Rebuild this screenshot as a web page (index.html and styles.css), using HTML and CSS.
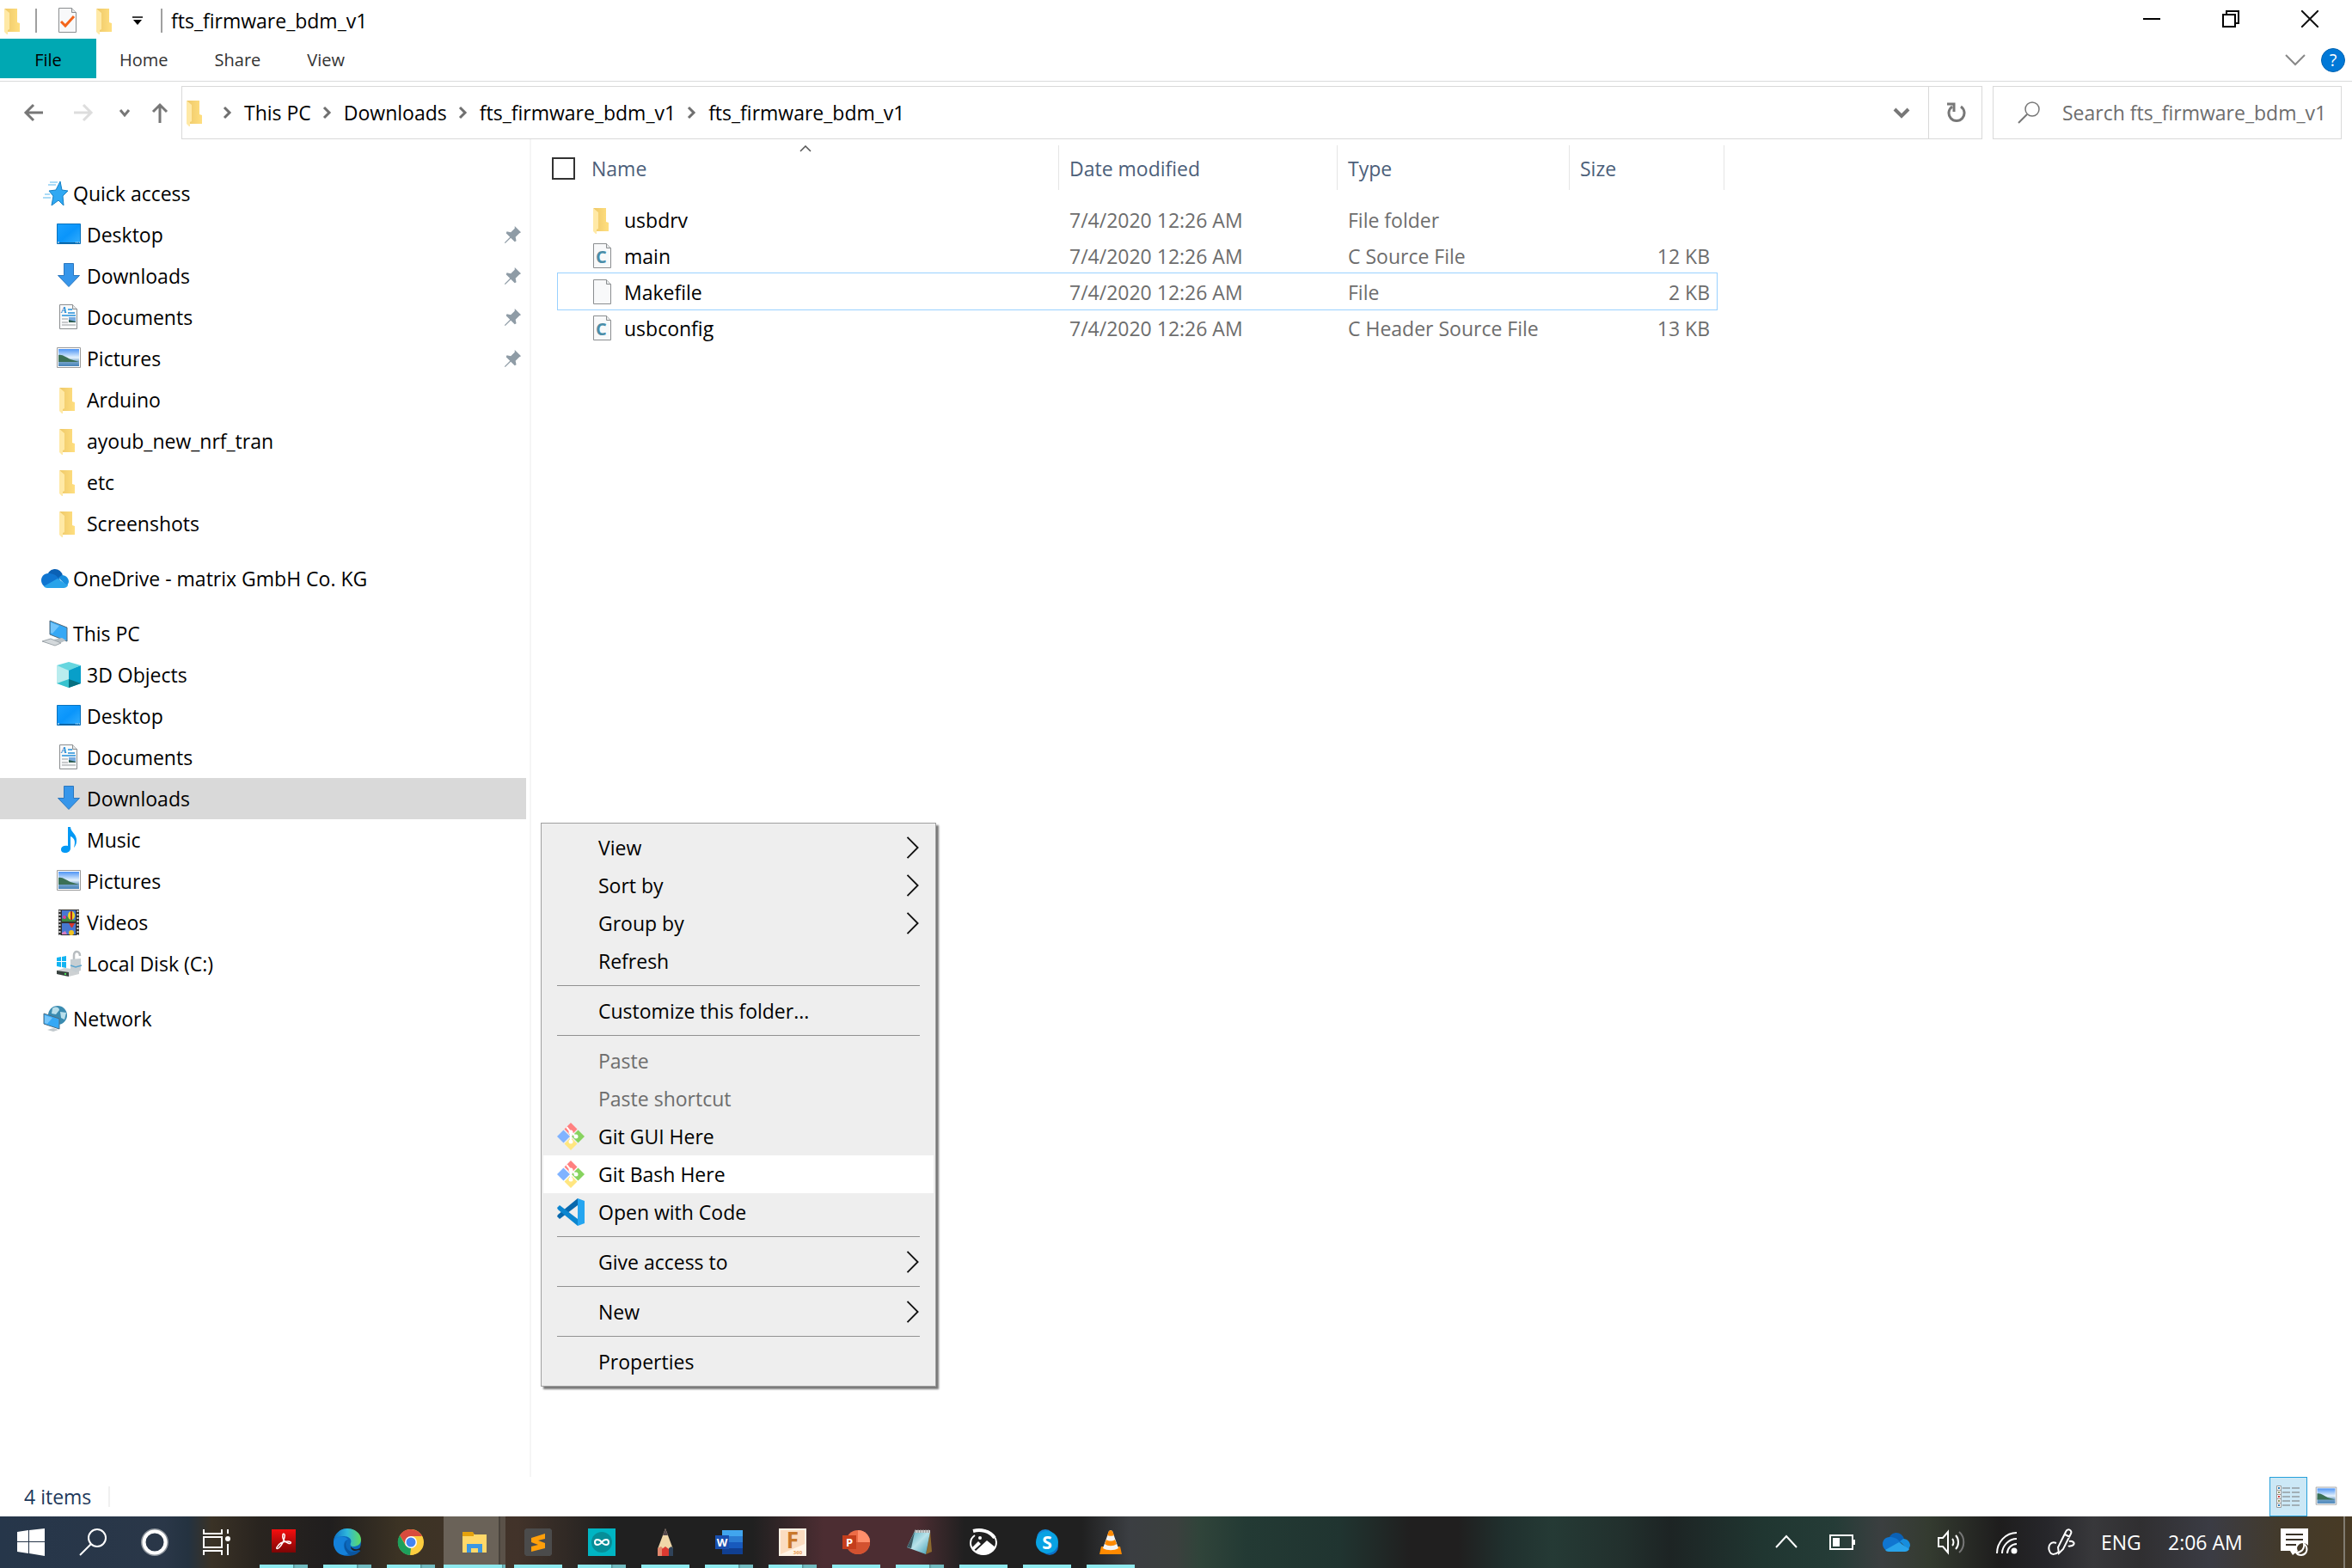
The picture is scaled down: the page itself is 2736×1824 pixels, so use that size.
FILE: index.html
```html
<!DOCTYPE html>
<html lang="en">
<head>
    <meta charset="UTF-8">
    <meta name="viewport" content="width=device-width, initial-scale=1.0">
    <title>fts_firmware_bdm_v1</title>
    <link rel="stylesheet" href="styles.css">
</head>
<body>
    <!-- shared icons -->
    <svg class="defs" width="0" height="0">
        <defs>
            <linearGradient id="gFolder"><stop offset="0" stop-color="#eec868"/><stop offset="1" stop-color="#ffdf80"/></linearGradient>
            <linearGradient id="gBlue" x2="1" y2="1"><stop offset="0" stop-color="#1ba1ff"/><stop offset=".5" stop-color="#0a95fb"/><stop offset="1" stop-color="#35aefc"/></linearGradient>
            <linearGradient id="gSky" x2="0" y2="1"><stop offset="0" stop-color="#4f95f5"/><stop offset=".5" stop-color="#e4f2fd"/><stop offset=".7" stop-color="#7fa9cf"/><stop offset="1" stop-color="#4783b8"/></linearGradient>
            <linearGradient id="gEdge" x2="1" y2="0"><stop offset="0" stop-color="#0c6fc7"/><stop offset=".5" stop-color="#2fb8dc"/><stop offset="1" stop-color="#5fdb60"/></linearGradient>
            <linearGradient id="gAdobe" x2="0" y2="1"><stop offset="0" stop-color="#f50f0f"/><stop offset="1" stop-color="#7d0505"/></linearGradient>
            <linearGradient id="gNote" x2="1" y2="1"><stop offset="0" stop-color="#4ba6b9"/><stop offset=".5" stop-color="#b9e3ea"/><stop offset="1" stop-color="#3f9cb3"/></linearGradient>
        </defs>
        <symbol id="folder" viewBox="0 0 32 32">
            <path d="M5 2h15v16l3 1v10H8V6z" fill="url(#gFolder)"/>
            <path d="M5 2l6 5v19l-2 1v6l-4-4z" fill="#ffe9a6"/>
        </symbol>
        <symbol id="star" viewBox="0 0 32 32">
            <path d="M22 2l2 10 7 1-6 6 1 11-6-6-8 6 2-11-5-6 8-1z" fill="#31a9f3" stroke="#1580c4"/>
            <path d="M10 3h9M8 6h9M4 17h6M2 21h9" stroke="#8fcff5" stroke-width="1.5"/>
        </symbol>
        <symbol id="desktop" viewBox="0 0 32 32">
            <path d="M2.500 3.500h27v23h-27z" fill="url(#gBlue)" stroke="#0a73be"/>
            <path d="M3 25.500h26" stroke="#0b5d98"/><path d="M3 25h2M24 25h1M26 25h1M28 25h1" stroke="#fff"/>
        </symbol>
        <symbol id="download" viewBox="0 0 32 32"><path d="M10.500 1.500h11v14h7L16 28.500 3.500 15.500h7z" fill="#3796ea" stroke="#2b77bf"/></symbol>
        <symbol id="page" viewBox="0 0 32 32">
            <path d="M5.500 1.500h15l5 5v23h-20z" fill="#f8f9fa" stroke="#8b8e90"/>
            <path d="M20.500 1.500v5h5" fill="#e7e9ea" stroke="#8b8e90"/>
        </symbol>
        <symbol id="document" viewBox="0 0 32 32">
            <use href="#page"/>
            <text x="7" y="11" font-family="Liberation Serif, serif" font-size="10" font-weight="bold" font-style="italic" fill="#1583cf">A</text>
            <path d="M15 7h5M15 11h8M8 14h16" stroke="#2590da" stroke-width="1.500"/>
            <path d="M8 18h7M8 22h7M8 25h16" stroke="#9a9da0" stroke-width="1.200"/>
            <path d="M16 16h8v6h-8z" fill="#78abe0"/><path d="M16 19l8 2v1h-8z" fill="#2f5d50"/>
        </symbol>
        <symbol id="picture" viewBox="0 0 32 32">
            <path d="M2.500 3.500h27v23h-27z" fill="#fff" stroke="#9b9b9b"/>
            <path d="M4 5h24v20H4z" fill="url(#gSky)"/>
            <path d="M4 12c5-1 9 3 14 5l10 3H4z" fill="#3b7056"/>
        </symbol>
        <symbol id="pin" viewBox="0 0 24 24">
            <path d="M15 1l8 8-2 1-5 5 1 5-2 1-5-5-7 7-1-1 7-7-5-5 1-2 5 1 5-5z" fill="#8f9ca6"/>
        </symbol>
        <symbol id="cloud" viewBox="0 0 32 32">
            <path d="M7 15a9 9 0 0 1 18-2l-8 6z" fill="#0b61b5"/>
            <path d="M8 10c-5 0-8 4-8 8s3 8 6 8l16-8c-4-6-8-8-14-8z" fill="#1075d0"/>
            <path d="M20 15l4-3c5 0 8 4 8 8l-2 5z" fill="#178ddd"/>
            <path d="M3 25l16-9 12 8c-1 2-3 3-5 3H7c-2 0-3-1-4-2z" fill="#29a3ea"/>
        </symbol>
        <symbol id="pc" viewBox="0 0 32 32">
            <path d="M10 1l20 8v16L10 17z" fill="#35a8f5" stroke="#52697a"/>
            <path d="M11 3l10 4-8 9-2-1z" fill="#74c5fa"/>
            <path d="M14 23l10-2 5 3-7 3z" fill="#b9c1c6"/><path d="M1 25l10-3 12 5-7 3z" fill="#d4d9dc" stroke="#9da5aa"/>
        </symbol>
        <symbol id="cube" viewBox="0 0 32 32">
            <path d="M2 5l14 5v21L2 26z" fill="#b9ecee"/><path d="M30 5l-14 5v21l14-5z" fill="#089fc9"/>
            <path d="M2 5l14-4 14 4-14 6z" fill="#66d6df"/><path d="M2 26l14-5v10z" fill="#38c3cf"/><path d="M30 26l-14-5v10z" fill="#066f80"/>
        </symbol>
        <symbol id="music" viewBox="0 0 32 32">
            <path d="M15 1h3c0 6 8 8 7 17 0 3-2 6-3 7 2-7 1-11-4-13v14c0 3-3 5-6 5s-5-1-5-4 3-5 8-4z" fill="#0499f5"/>
        </symbol>
        <symbol id="video" viewBox="0 0 32 32">
            <path d="M4 1h24v30H4z" fill="#333"/><path d="M8 2h16v13H8zM8 17h16v13H8z" fill="#4777d2"/>
            <path d="M5.500 2v29M26.500 2v29" stroke="#ddd" stroke-width="2" stroke-dasharray="2 2"/>
            <path d="M8 12l5-4 5 5h6v2H8z" fill="#3c8a42"/><circle cx="11" cy="10" r="2" fill="#d93fa0"/>
            <ellipse cx="19" cy="8" rx="4" ry="5" fill="#f1d120"/><path d="M19 3v10" stroke="#b1281d" stroke-width="2"/>
            <path d="M16 17h7l-3 5h-1z" fill="#d6352b"/><circle cx="19" cy="28" r="3" fill="#f1c320"/><path d="M8 28l4-2 2 4H8z" fill="#d57fc3"/>
        </symbol>
        <symbol id="disk" viewBox="0 0 32 32">
            <path d="M2 9l5-1v5H2zM8 8l5-1v6H8zM2 14h5v6l-5-1zM8 14h5v7l-5-1z" fill="#12b4f2"/>
            <path d="M2 24l9-3 17 2v5l-12 3-14-3z" fill="#cdd1d3"/><path d="M2 24l14 2v5L2 28z" fill="#37413e"/><path d="M11 28h2" stroke="#4ce05a" stroke-width="2"/>
            <path d="M22 12V6c0-6 7-5 7 1" fill="none" stroke="#b8bdc0" stroke-width="2.500"/><path d="M18 11l12-1v14l-6 2-6-3z" fill="#c7ced2"/><path d="M18 18l6 2 7-2" fill="none" stroke="#5ca5cf" stroke-width="1.500"/>
        </symbol>
        <symbol id="network" viewBox="0 0 32 32">
            <circle cx="19" cy="12" r="11" fill="#3a8bb0"/><path d="M13 4c4-3 8-1 8 2l-4 5-5-1zM22 8l7 1-2 8-4-2z" fill="#b9dfeb"/>
            <path d="M3 10l18 6v12L3 22z" fill="#35a8f5" stroke="#4d6d82"/><path d="M4 12l9 3-6 7-3-1z" fill="#74c5fa"/>
            <path d="M7 29l7-2 6 2-6 2z" fill="#c2c9cd"/>
        </symbol>
        <symbol id="cfile" viewBox="0 0 32 32">
            <use href="#page"/>
            <text x="8" y="24" font-family="Open Sans, sans-serif" font-size="20" font-weight="bold" fill="#4a8da8">C</text>
        </symbol>
        <symbol id="crumb" viewBox="0 0 12 16"><path d="M2 2l6 6-6 6" fill="none" stroke="#6f6f6f" stroke-width="3"/></symbol>
        <symbol id="sub" viewBox="0 0 16 28"><path d="M1 1l13 13L1 27" fill="none" stroke="#111" stroke-width="2"/></symbol>
        <symbol id="git" viewBox="0 0 32 32">
            <path d="M16 0l7.500 7.500L16 15 8.500 7.500z" fill="#ff8080"/><path d="M7.500 8.500L15 16l-7.500 7.500L0 16z" fill="#80b3ff"/>
            <path d="M24.500 8.500L32 16l-7.500 7.500L17 16z" fill="#87d35f"/><path d="M16 17l7.500 7.500L16 32l-7.500-7.500z" fill="#ffe680"/>
            <path d="M11 5l5 6v12M16 11l6 5" fill="none" stroke="#fff" stroke-width="2"/>
            <circle cx="16" cy="11" r="2.500" fill="#fff"/><circle cx="16" cy="22" r="2.500" fill="#fff"/><circle cx="22" cy="16" r="2.500" fill="#fff"/>
        </symbol>
    </svg>

    <div class="explorer">
        <header class="titlebar">
            <svg class="icon"><use href="#folder"/></svg>
            <span class="bar"></span>
            <svg class="icon" viewBox="0 0 32 32"><use href="#page"/><path d="M8 17l5 5 10-11" fill="none" stroke="#f4651a" stroke-width="3"/></svg>
            <svg class="icon"><use href="#folder"/></svg>
            <svg class="caret" viewBox="0 0 12 10"><path d="M0 1h12" stroke="#000" stroke-width="1.500"/><path d="M1 4h10L6 10z"/></svg>
            <span class="bar"></span>
            <h1>fts_firmware_bdm_v1</h1>
            <div class="controls">
                <button aria-label="Minimize"><svg viewBox="0 0 20 20"><path d="M0 10h20" stroke="#000" stroke-width="2"/></svg></button>
                <button aria-label="Restore"><svg viewBox="0 0 20 20"><path d="M1 5h14v14H1zM5 5V1h14v14h-4" fill="none" stroke="#000" stroke-width="2"/></svg></button>
                <button aria-label="Close"><svg viewBox="0 0 20 20"><path d="M0 0l20 20M20 0L0 20" stroke="#111" stroke-width="2"/></svg></button>
            </div>
        </header>

        <nav class="ribbon">
            <button class="tab file">File</button>
            <button class="tab">Home</button>
            <button class="tab">Share</button>
            <button class="tab">View</button>
            <button class="expand" aria-label="Expand the Ribbon"><svg viewBox="0 0 24 14"><path d="M1 1l11 11L23 1" fill="none" stroke="#888" stroke-width="2"/></svg></button>
            <button class="help" aria-label="Help">?</button>
        </nav>

        <div class="toolbar">
            <div class="arrows">
                <button aria-label="Back"><svg viewBox="0 0 24 24"><path d="M12 3l-9 9 9 9M3 12h20" fill="none" stroke="#777" stroke-width="3"/></svg></button>
                <button aria-label="Forward" disabled><svg viewBox="0 0 24 24"><path d="M12 3l9 9-9 9M21 12H1" fill="none" stroke="#ddd" stroke-width="3"/></svg></button>
                <button aria-label="Recent locations"><svg viewBox="0 0 24 24"><path d="M7 9l5 6 5-6" fill="none" stroke="#777" stroke-width="3"/></svg></button>
                <button aria-label="Up"><svg viewBox="0 0 24 24"><path d="M4 11l8-8 8 8M12 3v21" fill="none" stroke="#777" stroke-width="3"/></svg></button>
            </div>
            <div class="address">
                <svg class="icon"><use href="#folder"/></svg>
                <svg class="crumb"><use href="#crumb"/></svg>
                <a href="#">This PC</a>
                <svg class="crumb"><use href="#crumb"/></svg>
                <a href="#">Downloads</a>
                <svg class="crumb"><use href="#crumb"/></svg>
                <a href="#">fts_firmware_bdm_v1</a>
                <svg class="crumb"><use href="#crumb"/></svg>
                <a href="#">fts_firmware_bdm_v1</a>
                <button class="history" aria-label="Previous locations"><svg viewBox="0 0 24 24"><path d="M4 8l8 8 8-8" fill="none" stroke="#777" stroke-width="4"/></svg></button>
                <button class="refresh" aria-label="Refresh"><svg viewBox="0 0 24 24"><path d="M18 5a9 9 0 1 1-10 0" fill="none" stroke="#777" stroke-width="3"/><path d="M2 2h8v9" fill="none" stroke="#777" stroke-width="3"/></svg></button>
            </div>
            <label class="search">
                <svg viewBox="0 0 26 26"><circle cx="17" cy="9" r="8" fill="none" stroke="#777" stroke-width="1.500"/><path d="M11 15L1 25" stroke="#777" stroke-width="2"/></svg>
                <input type="text" placeholder="Search fts_firmware_bdm_v1" aria-label="Search">
            </label>
        </div>

        <main class="panes">
            <nav class="tree">
                <ul>
                    <li><a class="root" href="#"><svg class="icon"><use href="#star"/></svg>Quick access</a></li>
                    <li><a href="#"><svg class="icon"><use href="#desktop"/></svg>Desktop<svg class="pin"><use href="#pin"/></svg></a></li>
                    <li><a href="#"><svg class="icon"><use href="#download"/></svg>Downloads<svg class="pin"><use href="#pin"/></svg></a></li>
                    <li><a href="#"><svg class="icon"><use href="#document"/></svg>Documents<svg class="pin"><use href="#pin"/></svg></a></li>
                    <li><a href="#"><svg class="icon"><use href="#picture"/></svg>Pictures<svg class="pin"><use href="#pin"/></svg></a></li>
                    <li><a href="#"><svg class="icon"><use href="#folder"/></svg>Arduino</a></li>
                    <li><a href="#"><svg class="icon"><use href="#folder"/></svg>ayoub_new_nrf_tran</a></li>
                    <li><a href="#"><svg class="icon"><use href="#folder"/></svg>etc</a></li>
                    <li><a href="#"><svg class="icon"><use href="#folder"/></svg>Screenshots</a></li>
                </ul>
                <ul>
                    <li><a class="root" href="#"><svg class="icon"><use href="#cloud"/></svg>OneDrive - matrix GmbH Co. KG</a></li>
                </ul>
                <ul>
                    <li><a class="root" href="#"><svg class="icon"><use href="#pc"/></svg>This PC</a></li>
                    <li><a href="#"><svg class="icon"><use href="#cube"/></svg>3D Objects</a></li>
                    <li><a href="#"><svg class="icon"><use href="#desktop"/></svg>Desktop</a></li>
                    <li><a href="#"><svg class="icon"><use href="#document"/></svg>Documents</a></li>
                    <li><a class="current" href="#"><svg class="icon"><use href="#download"/></svg>Downloads</a></li>
                    <li><a href="#"><svg class="icon"><use href="#music"/></svg>Music</a></li>
                    <li><a href="#"><svg class="icon"><use href="#picture"/></svg>Pictures</a></li>
                    <li><a href="#"><svg class="icon"><use href="#video"/></svg>Videos</a></li>
                    <li><a href="#"><svg class="icon"><use href="#disk"/></svg>Local Disk (C:)</a></li>
                </ul>
                <ul>
                    <li><a class="root" href="#"><svg class="icon"><use href="#network"/></svg>Network</a></li>
                </ul>
            </nav>

            <section class="files">
                <table>
                    <colgroup><col class="c-name"><col class="c-date"><col class="c-type"><col class="c-size"></colgroup>
                    <thead>
                        <tr>
                            <th>
                                <div class="head-name">
                                    <input type="checkbox" aria-label="Select all items">Name
                                    <svg class="sort" viewBox="0 0 14 8"><path d="M1 7l6-6 6 6" fill="none" stroke="#555" stroke-width="1.500"/></svg>
                                </div>
                            </th>
                            <th>Date modified</th>
                            <th>Type</th>
                            <th>Size</th>
                        </tr>
                    </thead>
                    <tbody>
                        <tr><td><div class="name"><svg class="icon"><use href="#folder"/></svg>usbdrv</div></td><td>7/4/2020 12:26 AM</td><td>File folder</td><td></td></tr>
                        <tr><td><div class="name"><svg class="icon"><use href="#cfile"/></svg>main</div></td><td>7/4/2020 12:26 AM</td><td>C Source File</td><td>12 KB</td></tr>
                        <tr class="focused"><td><div class="name"><svg class="icon"><use href="#page"/></svg>Makefile</div></td><td>7/4/2020 12:26 AM</td><td>File</td><td>2 KB</td></tr>
                        <tr><td><div class="name"><svg class="icon"><use href="#cfile"/></svg>usbconfig</div></td><td>7/4/2020 12:26 AM</td><td>C Header Source File</td><td>13 KB</td></tr>
                    </tbody>
                </table>
            </section>
        </main>

        <footer class="status">
            <span class="count">4 items</span>
            <div class="views">
                <button class="on" aria-label="Details"><svg viewBox="0 0 28 28"><path d="M.5 1.500h5v25h-5zM0 6.500h6M0 11.500h6M0 16.500h6M0 21.500h6" fill="#fff" stroke="#999"/><path d="M3 3v2M3 23v2" stroke="#247bb5" stroke-width="2"/><path d="M3 8v2M3 18v2" stroke="#8a9360" stroke-width="2"/><path d="M3 13v2" stroke="#c33" stroke-width="2"/><path d="M7 4h9M18 4h9M7 9h9M18 9h9M7 14h9M18 14h9M7 19h9M18 19h9M7 24h9M18 24h9" stroke="#777"/></svg></button>
                <button aria-label="Large icons"><svg><use href="#picture"/></svg></button>
            </div>
        </footer>
    </div>

    <div class="menu" role="menu">
        <button role="menuitem">View<svg class="sub"><use href="#sub"/></svg></button>
        <button role="menuitem">Sort by<svg class="sub"><use href="#sub"/></svg></button>
        <button role="menuitem">Group by<svg class="sub"><use href="#sub"/></svg></button>
        <button role="menuitem">Refresh</button>
        <hr>
        <button role="menuitem">Customize this folder...</button>
        <hr>
        <button role="menuitem" disabled>Paste</button>
        <button role="menuitem" disabled>Paste shortcut</button>
        <button role="menuitem"><svg class="app"><use href="#git"/></svg>Git GUI Here</button>
        <button role="menuitem" class="hover"><svg class="app"><use href="#git"/></svg>Git Bash Here</button>
        <button role="menuitem"><svg class="app" viewBox="0 0 32 32"><path d="M0 21l3 3L24 8V0L1 19z" fill="#0868ad"/><path d="M0 11l3-3 21 16v8L1 13z" fill="#0c86d0"/><path d="M24 0l8 3v26l-8 3z" fill="#25a5f0"/></svg>Open with Code</button>
        <hr>
        <button role="menuitem">Give access to<svg class="sub"><use href="#sub"/></svg></button>
        <hr>
        <button role="menuitem">New<svg class="sub"><use href="#sub"/></svg></button>
        <hr>
        <button role="menuitem">Properties</button>
    </div>

    <footer class="taskbar">
        <button class="sys" aria-label="Start"><svg viewBox="0 0 32 32"><path d="M0 4l13-2v13H0zM14 2l18-2v15H14zM0 16h13v13L0 27zM14 16h18v16l-18-3z" fill="#fff"/></svg></button>
        <button class="sys" aria-label="Search"><svg viewBox="0 0 32 32"><circle cx="21" cy="11" r="10" fill="none" stroke="#fff" stroke-width="2"/><path d="M14 18L1 31" stroke="#fff" stroke-width="2"/></svg></button>
        <button class="sys" aria-label="Cortana"><svg viewBox="0 0 32 32"><circle cx="16" cy="16" r="14" fill="none" stroke="#8d949c" stroke-width="4"/><circle cx="16" cy="16" r="12.500" fill="none" stroke="#fff" stroke-width="4"/></svg></button>
        <button class="sys" aria-label="Task View"><svg viewBox="0 0 32 32"><path d="M1 1v5h21V1M1 31v-5h21v5M1 10h21v12H1zM29 1v5M29 18v13" fill="none" stroke="#fff" stroke-width="2"/><circle cx="29" cy="12" r="3" fill="#fff"/></svg></button>

        <div class="apps">
            <button class="stack" aria-label="Acrobat Reader"><svg viewBox="0 0 32 32"><path d="M2 1h28v27H2z" fill="url(#gAdobe)"/><path d="M8 22c2-4 7-7 13-7 5 0 4 4 0 2-5-2-7-6-6-10 1-2 3 0 2 3-1 5-4 10-6 12s-4 2-3 0z" fill="none" stroke="#fff" stroke-width="1.500"/></svg></button>
            <button class="stack" aria-label="Edge"><svg viewBox="0 0 32 32"><circle cx="16" cy="16" r="16" fill="#0c69bd"/><path d="M0 15C1 6 8 0 16 0c9 0 16 6 16 13 0 6-5 8-9 8-3 0-4-2-3-4 2-5-3-8-8-8C6 9 1 12 0 15z" fill="url(#gEdge)"/><path d="M0 15c2-6 13-8 17-2-6 0-8 12 1 16-9 6-19-3-18-14z" fill="#1481da"/><path d="M18 13c-6 1-5 13 4 14 4 0 6-1 8-3 2-1 3 2-1 4-3 3-8 4-10 3-7-4-9-16-1-18z" fill="#0a559f"/><path d="M20 21c3 4 8 4 12 1v4l-3-1c-4 2-9 1-9-4z" fill="#222"/></svg></button>
            <button class="stack" aria-label="Chrome"><svg viewBox="0 0 32 32"><circle cx="16" cy="16" r="15" fill="#fccd3f"/><path d="M3 8a15 15 0 0 1 26 1H16l-6 10z" fill="#d84b3d"/><path d="M3 8l7 12 6 3-1 8A15 15 0 0 1 3 8z" fill="#1da05c"/><path d="M16 9h13c4 9-2 21-13 22l6-12z" fill="#fccd3f"/><circle cx="16" cy="16" r="7" fill="#fff"/><circle cx="16" cy="16" r="5.500" fill="#4484f2"/></svg></button>
            <button class="stack active" aria-label="File Explorer"><svg viewBox="0 0 32 32"><path d="M2 4h12l2 3v5H2z" fill="#e5a20d"/><path d="M2 7h28v21H2z" fill="#ffd869"/><path d="M2 7h13v2H2z" fill="#e5a20d"/><path d="M7 28V18h18v10h-5v-5h-8v5z" fill="#3b97e3"/></svg></button>
            <button aria-label="Sublime Text"><svg viewBox="0 0 32 32"><path d="M2 0h28l2 2v28l-2 2H2l-2-2V2z" fill="#4b4b4b"/><path d="M24 6v6l-8 2 8 3v6L8 27v-6l8-2-8-3v-5z" fill="#ff9f0a"/></svg></button>
            <button class="stack" aria-label="Arduino"><svg viewBox="0 0 32 32"><path d="M0 0h32v32H0z" fill="#00b5c3"/><circle cx="16" cy="16" r="12" fill="#068e98"/><path d="M16 16c-3-4-8-4-8 0s5 4 8 0 8-4 8 0-5 4-8 0z" fill="none" stroke="#fff" stroke-width="2"/></svg></button>
            <button aria-label="Sketch"><svg viewBox="0 0 32 32"><path d="M16 0l9 24H7z" fill="#f0d7a8"/><path d="M16 0l3 8h-6z" fill="#54484c"/><path d="M7 23l4-2 2 2v9H7z" fill="#e1876c"/><path d="M12 24l4-3 4 3v8h-8z" fill="#dc3a31"/><path d="M20 23l3-2 2 2v9h-5z" fill="#30435a"/></svg></button>
            <button class="stack" aria-label="Word"><svg viewBox="0 0 32 32"><path d="M8 2h24v28H8z" fill="#103f91"/><path d="M8 2h24v8H8z" fill="#41a5ee"/><path d="M8 9h24v7H8z" fill="#2b7cd3"/><path d="M8 16h24v7H8z" fill="#185abd"/><path d="M0 8h16v16H0z" fill="#194fae"/><text x="8" y="21" text-anchor="middle" font-family="Open Sans, sans-serif" font-size="13" font-weight="bold" fill="#fff">W</text></svg></button>
            <button class="stack" aria-label="Fusion 360"><svg viewBox="0 0 32 32"><path d="M0 0h32v32H0z" fill="#fff3e6"/><path d="M2 2h28v16L2 30z" fill="#fbdcc0"/><text x="16" y="23" text-anchor="middle" font-family="Open Sans, sans-serif" font-size="26" font-weight="bold" fill="#c9782b">F</text><text x="22" y="30" text-anchor="middle" font-family="Open Sans, sans-serif" font-size="6" font-weight="bold" fill="#e79a55">360</text></svg></button>
            <button aria-label="PowerPoint"><svg viewBox="0 0 32 32"><circle cx="18" cy="16" r="14" fill="#ed6c47"/><path d="M18 2a14 14 0 0 1 14 14H18z" fill="#ff8f6b"/><path d="M4 16h28a14 14 0 0 1-28 0z" fill="#d35230"/><path d="M0 8h16v16H0z" fill="#c43e1c"/><text x="8" y="21" text-anchor="middle" font-family="Open Sans, sans-serif" font-size="13" font-weight="bold" fill="#fff">P</text></svg></button>
            <button class="stack" aria-label="Notepad"><svg viewBox="0 0 32 32"><path d="M28 3l2 24-7 3z" fill="#8d6b2f"/><path d="M10 3l18 1-5 26L1 22z" fill="url(#gNote)"/><path d="M10 4l-9 18 5 1z" fill="#3c5962"/><path d="M10 2h18v3H10z" fill="#d7dadb"/><path d="M11 1v4M14 1v4M17 1v4M20 1v4M23 1v4M26 1v4" stroke="#808080"/></svg></button>
            <button aria-label="Photos"><svg viewBox="0 0 32 32"><path d="M5 3c11-4 25 2 26 13 0 8-7 14-15 14S1 24 1 17c0-4 2-7 5-9" fill="none" stroke="#fff" stroke-width="2"/><path d="M4 3c8-2 19-1 25 8" fill="none" stroke="#fff" stroke-width="4"/><circle cx="12" cy="11" r="2" fill="#fff"/><path d="M2 23l8-8 3 3-9 8zM6 27l14-13 10 8c-3 9-18 11-24 5z" fill="#fff"/></svg></button>
            <button aria-label="Skype"><svg viewBox="0 0 32 32"><circle cx="14" cy="11" r="10" fill="#1288d8"/><circle cx="19" cy="21" r="10" fill="#0b70c9"/><circle cx="16" cy="16" r="13" fill="#09a2e3"/><text x="16" y="24" text-anchor="middle" font-family="Open Sans, sans-serif" font-size="21" font-weight="bold" fill="#fff">S</text></svg></button>
            <button aria-label="VLC"><svg viewBox="0 0 32 32"><path d="M5 21h22l2 9H3z" fill="#ff8a00"/><path d="M16 2l2 1 7 20c-5 3-13 3-18 0l7-20z" fill="#f4f4f4"/><path d="M14 3l2-1 2 1 2 5c-2 1-6 1-8 0zM11 13c3 2 7 2 10 0l2 5c-4 3-10 3-14 0z" fill="#ff8a00"/></svg></button>
        </div>

        <div class="tray">
            <button aria-label="Show hidden icons"><svg viewBox="0 0 32 32"><path d="M4 22l12-13 12 13" fill="none" stroke="#fff" stroke-width="2"/></svg></button>
            <button aria-label="Battery"><svg viewBox="0 0 32 32"><path d="M3 8h26v16H3z" fill="none" stroke="#fff" stroke-width="2"/><path d="M6 11h8v10H6zM30 13h2v6h-2z" fill="#fff"/></svg></button>
            <button aria-label="OneDrive"><svg><use href="#cloud"/></svg></button>
            <button aria-label="Volume"><svg viewBox="0 0 32 32"><path d="M1 11h5l6-7v24l-6-7H1z" fill="none" stroke="#fff" stroke-width="2"/><path d="M17 12c2 2 2 6 0 8M21 8c4 4 4 12 0 16" fill="none" stroke="#fff" stroke-width="2"/><path d="M25 4c7 6 7 18 0 24" fill="none" stroke="#777" stroke-width="2"/></svg></button>
            <button aria-label="Network"><svg viewBox="0 0 32 32"><path d="M5 29C5 16 15 5 28 5M11 29c0-9 8-17 17-17M17 29c0-6 5-11 11-11" fill="none" stroke="#fff" stroke-width="2"/><circle cx="25" cy="26" r="3.500" fill="#fff"/></svg></button>
            <button aria-label="Pen"><svg viewBox="0 0 32 32"><path d="M12 22L21 4c2-5 8-2 6 2l-9 18-5 5zM20 7l6 3M10 17c-7-3-10 4-8 9 2 6 8 4 11 1M25 15c4-1 7 2 5 4s-5 1-6 2" fill="none" stroke="#fff" stroke-width="2"/></svg></button>
            <span class="lang">ENG</span>
            <time>2:06 AM</time>
            <button class="note" aria-label="Notifications"><svg viewBox="0 0 32 32"><path d="M0 0h32v20c-6-7-16 0-12 6l-6 5-3-5H0z" fill="#fff"/><path d="M6 7h20M6 13h20M6 19h12" stroke="#3a3328" stroke-width="2"/><path d="M27 18c5 3 5 12-3 13-3 0-5-1-6-3 6 0 10-4 9-10z" fill="none" stroke="#fff" stroke-width="2"/></svg></button>
        </div>
    </footer>
</body>
</html>
```
FILE: styles.css
```css
* {
    box-sizing: border-box;
}
body {
    margin: 0;
    min-height: 100vh;
    display: flex;
    flex-direction: column;
    font-family: "Open Sans", "Noto Sans", sans-serif;
    font-size: 23px;
    line-height: 32px;
    color: #000;
    background: #fff;
}
button, input {
    font: inherit;
    color: inherit;
    border: 0;
    padding: 0;
    margin: 0;
    background: none;
}
a {
    color: inherit;
    text-decoration: none;
}
svg {
    display: block;
    flex: none;
}
.defs {
    position: absolute;
    visibility: hidden;
}
.icon {
    width: 32px;
    height: 32px;
}
.explorer {
    flex: 1;
    display: flex;
    flex-direction: column;
}

/* title bar */
.titlebar {
    height: 45px;
    display: flex;
    align-items: center;
    padding-top: 2px;
}
.titlebar h1 {
    margin: 0;
    padding-left: 10px;
    font-size: 23px;
    font-weight: normal;
}
.titlebar .bar {
    width: 2px;
    height: 28px;
    margin: 0 20px 0 9px;
    background: #a0a0a0;
}
.titlebar .bar + h1 {
    margin-left: -20px;
}
.titlebar .icon + .icon {
    margin-left: 12px;
}
.caret {
    width: 12px;
    height: 10px;
    margin: 0 12px 0 15px;
}
.controls {
    margin-left: auto;
    margin-right: 3px;
    display: flex;
}
.controls button {
    width: 92px;
    height: 45px;
    padding-bottom: 4px;
    display: flex;
    align-items: center;
    justify-content: center;
}
.controls svg {
    width: 20px;
    height: 20px;
}

/* ribbon tabs */
.ribbon {
    display: flex;
    align-items: center;
    height: 50px;
    padding-right: 8px;
    border-bottom: 1px solid #dadbdc;
    font-size: 20px;
    color: #333;
}
.tab {
    height: 46px;
    margin-bottom: 3px;
    padding: 4px 27px 0;
}
.tab.file {
    width: 112px;
    background: #00a8b3;
    color: #000;
}
.expand {
    margin-left: auto;
    margin-right: 18px;
}
.expand svg {
    width: 24px;
    height: 14px;
}
.help {
    width: 28px;
    height: 28px;
    line-height: 26px;
    border-radius: 50%;
    border: 1px solid #0063b1;
    background: #0078d7;
    color: #fff;
}

/* navigation row */
.toolbar {
    display: flex;
    padding: 5px 12px 0 0;
}
.arrows {
    width: 211px;
    padding-left: 27px;
    display: flex;
    align-items: center;
}
.arrows svg {
    width: 24px;
    height: 24px;
}
.arrows button {
    width: 24px;
    margin-right: 17px;
}
.arrows button:first-child {
    margin-right: 34px;
}
.arrows button:disabled {
    margin-right: 24px;
}
.address {
    flex: 1;
    display: flex;
    align-items: center;
    height: 62px;
    border: 1px solid #d9d9d9;
}
.crumb {
    width: 12px;
    height: 16px;
    margin: 0 13px;
}
.address .icon + .crumb {
    margin-left: 15px;
}
.history {
    margin-left: auto;
    width: 62px;
}
.history svg, .refresh svg {
    width: 24px;
    height: 24px;
    margin: 0 auto;
}
.refresh {
    width: 62px;
    height: 60px;
    border-left: 1px solid #d9d9d9;
}
.search {
    width: 406px;
    margin-left: 12px;
    padding-left: 28px;
    display: flex;
    align-items: center;
    gap: 26px;
    border: 1px solid #d9d9d9;
}
.search svg {
    width: 26px;
    height: 26px;
}
.search input {
    flex: 1;
    min-width: 0;
}
.search input::placeholder {
    color: #6d6d6d;
}

/* tree and file list */
.panes {
    flex: 1;
    display: flex;
}
.tree {
    width: 618px;
    padding: 39px 4px 0 0;
    border-right: 2px solid #f5f5f5;
}
.tree ul {
    list-style: none;
    margin: 0 0 16px;
    padding: 0;
}
.tree a {
    display: flex;
    align-items: center;
    gap: 5px;
    height: 48px;
    padding-left: 64px;
}
.tree .root {
    padding-left: 48px;
}
.tree .current {
    background: #d9d9d9;
}
.pin {
    width: 22px;
    height: 22px;
    margin-left: auto;
    margin-right: 5px;
}
.files {
    flex: 1;
    padding: 7px 0 0 24px;
}
table {
    table-layout: fixed;
    width: 1364px;
    border-collapse: separate;
    border-spacing: 0;
}
.c-name {
    width: 590px;
}
.c-date {
    width: 324px;
}
.c-type {
    width: 270px;
}
.c-size {
    width: 180px;
}
th {
    height: 52px;
    padding: 2px 0 0 12px;
    font-weight: normal;
    text-align: left;
    color: #4c607a;
    border-right: 1px solid #e5e5e5;
}
th:first-child {
    padding: 0;
}
.head-name {
    position: relative;
    display: flex;
    align-items: center;
    gap: 19px;
    height: 52px;
    padding-top: 2px;
}
.head-name input {
    appearance: none;
    width: 27px;
    height: 26px;
    border: 2px solid #333;
}
.sort {
    position: absolute;
    left: calc(50% - 7px);
    top: 0;
    width: 14px;
    height: 8px;
}
tbody::before {
    content: "";
    display: block;
    height: 13px;
}
td {
    height: 42px;
    padding: 2px 0 0 12px;
    color: #6d6d6d;
}
td:last-child {
    text-align: right;
    padding-right: 17px;
}
td:first-child {
    padding-left: 43px;
}
.name {
    display: flex;
    align-items: center;
    gap: 9px;
    color: #000;
}
.focused {
    position: relative;
}
.focused::after {
    content: "";
    position: absolute;
    inset: -1px 8px -1px 6px;
    border: 1px solid #99d1ff;
}

/* status bar */
.status {
    display: flex;
    align-items: center;
    height: 46px;
    padding: 0 8px 0 28px;
    color: #1e395b;
}
.count {
    line-height: 24px;
    padding-right: 20px;
    border-right: 2px solid #f0f0f0;
}
.views {
    margin-left: auto;
    display: flex;
}
.views button {
    width: 44px;
    height: 46px;
    display: flex;
    align-items: center;
    justify-content: center;
}
.views svg {
    width: 28px;
    height: 28px;
}
.views .on {
    background: #cce8f6;
    border: 1px solid #26a0da;
}

/* context menu */
.menu {
    position: absolute;
    left: 629px;
    top: 957px;
    width: 460px;
    padding: 6px 2px;
    border: 1px solid #a0a0a0;
    background: #eee;
    box-shadow: 3px 3px 2px #777;
}
.menu button {
    position: relative;
    display: flex;
    align-items: center;
    width: 100%;
    height: 44px;
    padding-left: 64px;
}
.menu button:disabled {
    color: #6d6d6d;
}
.menu .hover {
    background: #fff;
}
.menu hr {
    margin: 6px 16px 7px;
    border: 0;
    border-top: 1px solid #919191;
}
.app {
    position: absolute;
    left: 16px;
    width: 32px;
    height: 32px;
}
.sub {
    width: 16px;
    height: 26px;
    margin-left: auto;
    margin-right: 16px;
}

/* taskbar */
.taskbar {
    display: flex;
    height: 60px;
    color: #fff;
    background: linear-gradient(90deg, #26364a 0, #2a3748 7%, #243240 8%, #3a3226 9%, #29241f 11%, #201e1e 14%, #3c3324 17%, #42332a 22%, #202020 26%, #202020 32%, #4c2d32 35%, #4c2d32 39%, #202020 41%, #202020 46%, #3b3e42 48%, #3b403e 50%, #30443a 51%, #233a34 53%, #203430 57%, #201f1f 60%, #201f1f 62%, #20302e 64%, #253a35 66%, #22302d 69%, #1d2424 71%, #203631 75%, #253c37 78%, #3b3f40 80%, #343b30 82%, #1e1d1d 85%, #26262a 87%, #38383b 89%, #302f31 91%, #3b3c44 94%, #433a2b 97%, #483a24 100%);
}
.taskbar button {
    display: flex;
    align-items: center;
    justify-content: center;
}
.taskbar svg {
    width: 32px;
    height: 32px;
}
.sys {
    width: 72px;
}
.apps {
    display: flex;
    gap: 18px;
    margin-left: 14px;
}
.apps button {
    width: 56px;
    border-bottom: 4px solid #8ee9ee;
    padding-top: 4px;
}
.apps .stack {
    border-image: linear-gradient(90deg, #8ee9ee 67%, #518a8d 67%, #70babf 71%) 4;
    border-width: 0 0 4px;
}
.apps .active {
    width: 72px;
    margin: 0 -8px;
    background: linear-gradient(90deg, #6a6258 64px, #48423b 64px, #48423b 66px, #5a5148 66px);
    border-image: linear-gradient(90deg, #8ee9ee 89%, #518a8d 89%, #70babf 92%) 4;
}
.tray {
    margin-left: auto;
    display: flex;
    align-items: center;
    padding-right: 8px;
}
.tray button {
    width: 64px;
    height: 60px;
}
.lang {
    width: 78px;
    padding-left: 14px;
}
time {
    width: 104px;
    padding-left: 14px;
}
.tray .note {
    width: 116px;
    border-right: 2px solid #817b70;
}
```
